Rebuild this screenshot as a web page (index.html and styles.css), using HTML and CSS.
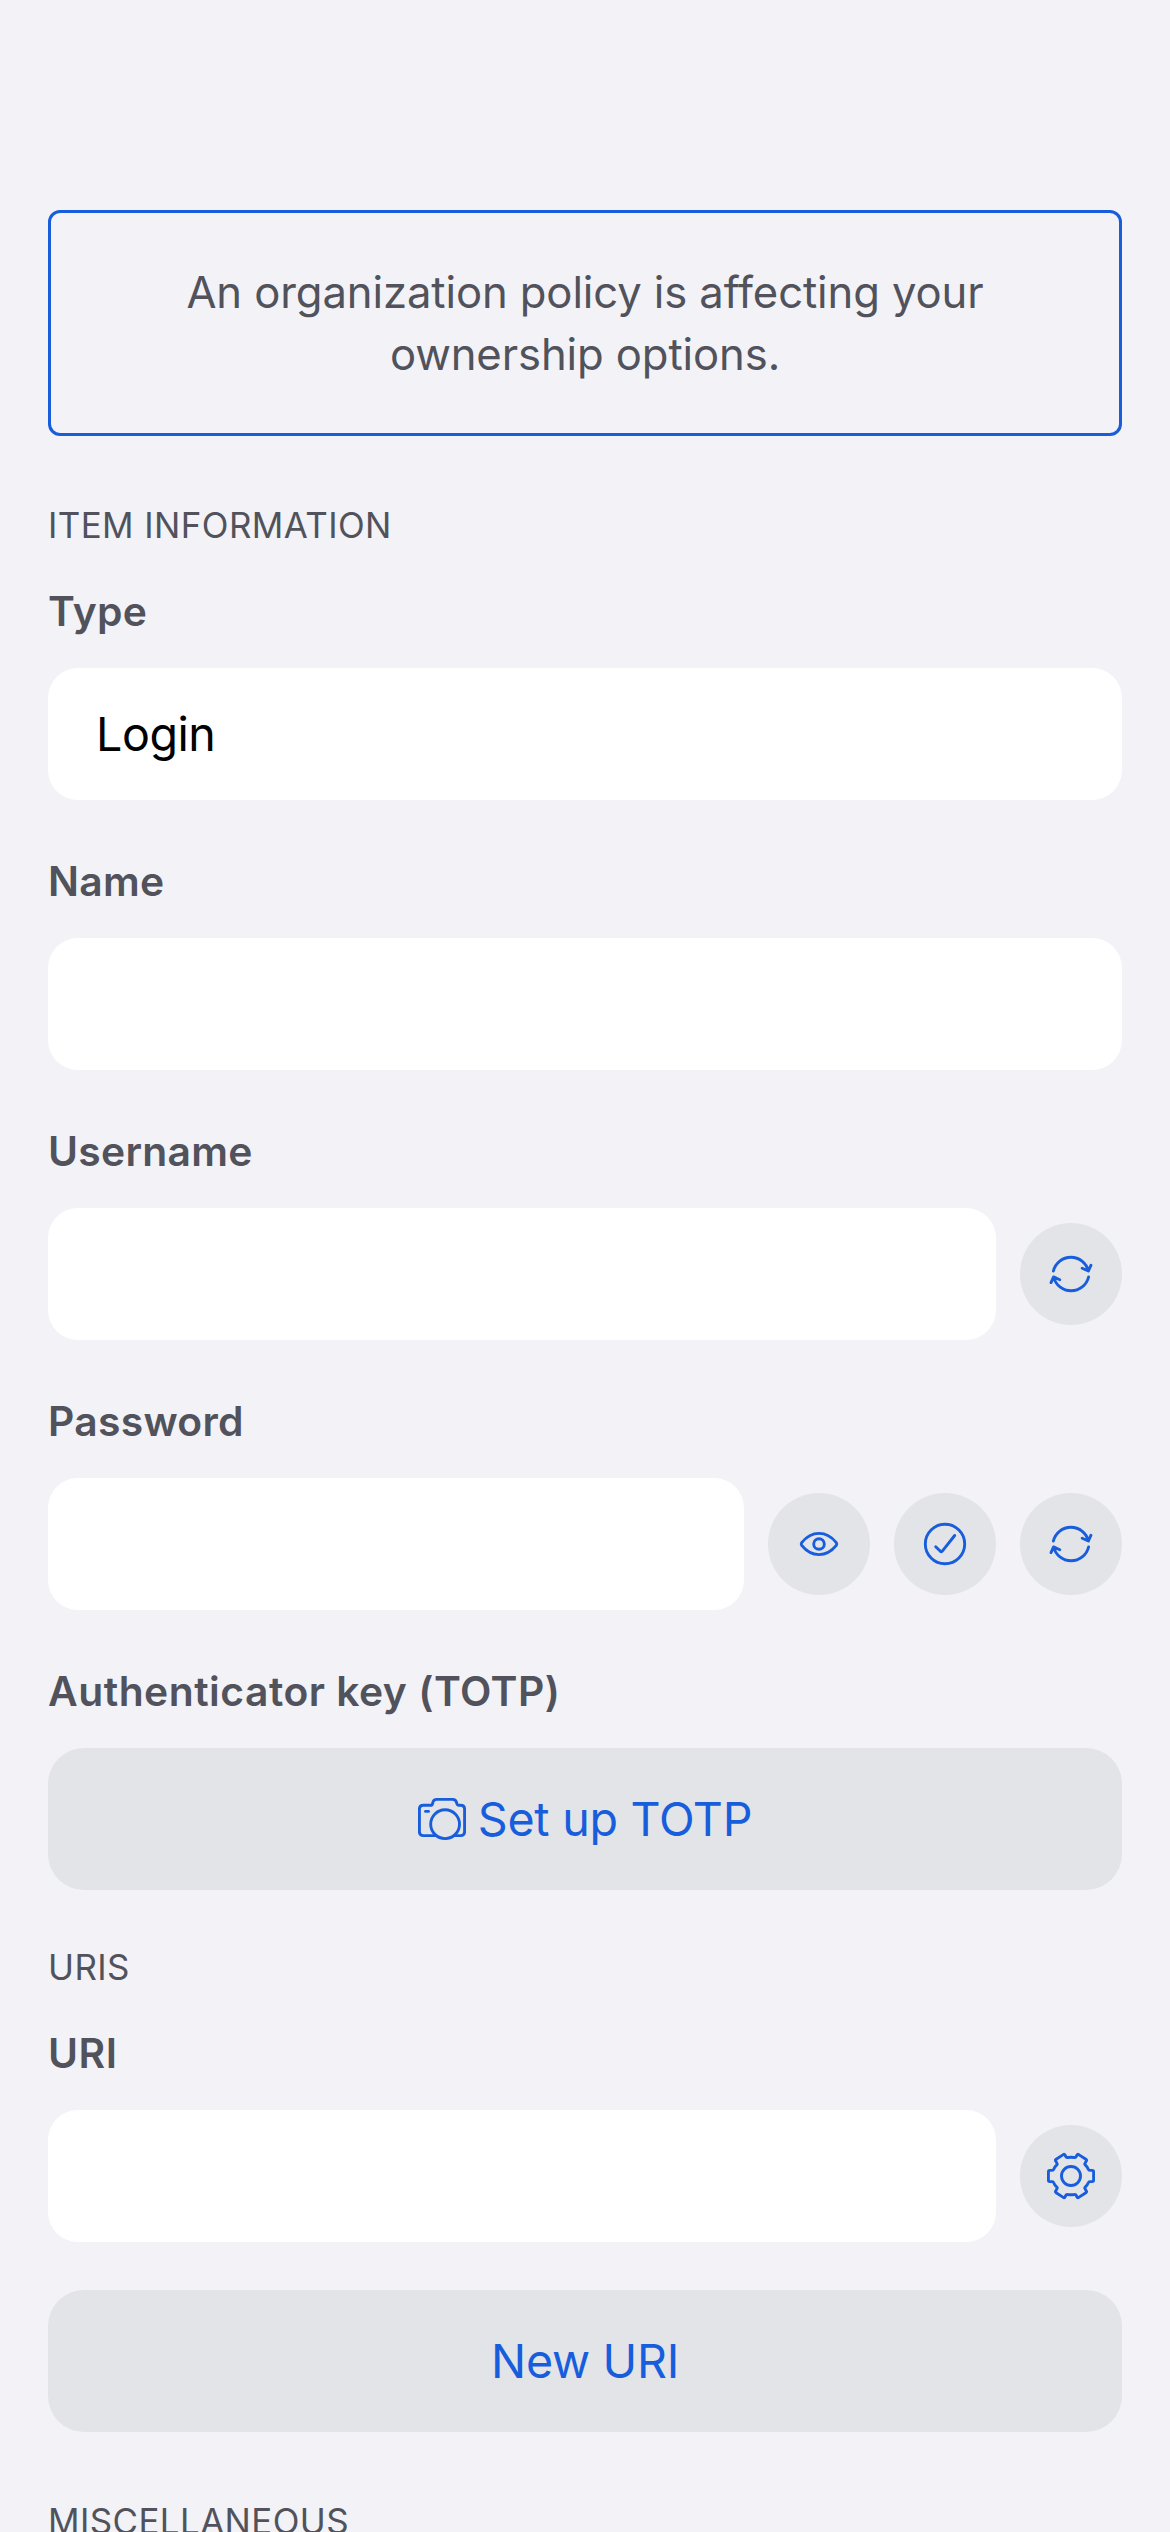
FILE: index.html
```
<!DOCTYPE html>
<html lang="en">
<head>
  <meta charset="utf-8">
  <title>Add item</title>
  <link rel="stylesheet" href="styles.css">
</head>
<body>
  <svg class="sprite" aria-hidden="true">
    <symbol id="icon-generate" viewBox="0 0 48 48">
      <path d="M6.4 21A18 18 0 0 1 41.4 21M35.2 18.2L41.4 21L44 15.2"/>
      <path d="M41.6 27A18 18 0 0 1 6.6 27M4 32.6L6.6 26.9L12.8 29.7"/>
    </symbol>
    <symbol id="icon-eye" viewBox="0 0 48 48">
      <path d="M6.7 22.6C10 18.5 16 13.4 24 13.4S38 18.5 41.3 22.6Q42.2 24 41.3 25.4C38 29.5 32 34.6 24 34.6S10 29.5 6.7 25.4Q5.8 24 6.7 22.6Z"/>
      <circle cx="24" cy="24" r="5.3"/>
    </symbol>
    <symbol id="icon-check" viewBox="0 0 48 48">
      <circle cx="24" cy="24" r="19.7"/>
      <path d="M14.7 26.7L19.4 31.3Q20.4 32.2 21.3 31.1L33.7 15.5"/>
    </symbol>
    <symbol id="icon-camera" viewBox="0 0 48 48">
      <path d="M18.2 40.6H5.4Q1.4 40.6 1.4 36.6V14.3Q1.4 10.3 5.4 10.3H12.6Q14.3 10.3 14.6 8.4Q15.2 4.4 18.8 4.4H34.6Q38.2 4.4 38.8 8.4Q39.1 10.3 40.8 10.3H42.6Q46.6 10.3 46.6 14.3V36.6Q46.6 40.6 42.6 40.6H36"/>
      <circle cx="27.1" cy="29.2" r="14.4"/>
      <path d="M7.5 16.4H10.5"/>
    </symbol>
    <symbol id="icon-gear" viewBox="0 0 48 48">
      <path d="M2.7 18.4H5.2Q6.3 18.4 6.7 17.3Q7.8 14.6 9.8 12.9Q10.5 12.2 10 11.4L8.6 8.8Q8.1 7.9 9.1 7.2L16.3 2.6Q17.5 1.9 18 2.9L18.8 4.6Q19.3 5.7 20.5 5.5Q24 5 27.5 5.5Q28.7 5.7 29.2 4.6L30 2.9Q30.5 1.9 31.7 2.6L38.9 7.2Q39.9 7.9 39.4 8.8L38 11.4Q37.5 12.2 38.2 12.9Q40.2 14.6 41.3 17.3Q41.7 18.4 42.8 18.4H45.3Q46.6 18.4 46.6 19.6V28.4Q46.6 29.6 45.3 29.6H42.8Q41.7 29.6 41.3 30.7Q40.2 33.4 38.2 35.1Q37.5 35.8 38 36.6L39.4 39.2Q39.9 40.1 38.9 40.8L31.7 45.4Q30.5 46.1 30 45.1L29.2 43.4Q28.7 42.3 27.5 42.5Q24 43 20.5 42.5Q19.3 42.3 18.8 43.4L18 45.1Q17.5 46.1 16.3 45.4L9.1 40.8Q8.1 40.1 8.6 39.2L10 36.6Q10.5 35.8 9.8 35.1Q7.8 33.4 6.7 30.7Q6.3 29.6 5.2 29.6H2.7Q1.4 29.6 1.4 28.4V19.6Q1.4 18.4 2.7 18.4Z"/>
      <circle cx="24" cy="24" r="9.5"/>
    </symbol>
  </svg>

  <main class="screen">
    <p class="notice">An organization policy is affecting your<br>ownership options.</p>

    <section class="section">
      <h2 class="section-title">ITEM INFORMATION</h2>
      <div class="fields">
        <div class="field">
          <span class="label">Type</span>
          <div class="row"><div class="input">Login</div></div>
        </div>
        <div class="field">
          <span class="label">Name</span>
          <div class="row"><div class="input"></div></div>
        </div>
        <div class="field">
          <span class="label">Username</span>
          <div class="row">
            <div class="input"></div>
            <button class="round" aria-label="Generate username"><svg class="icon"><use href="#icon-generate"/></svg></button>
          </div>
        </div>
        <div class="field">
          <span class="label">Password</span>
          <div class="row">
            <div class="input"></div>
            <button class="round" aria-label="Show password"><svg class="icon"><use href="#icon-eye"/></svg></button>
            <button class="round" aria-label="Check password"><svg class="icon"><use href="#icon-check"/></svg></button>
            <button class="round" aria-label="Generate password"><svg class="icon"><use href="#icon-generate"/></svg></button>
          </div>
        </div>
        <div class="field">
          <span class="label label-caps">Authenticator key (TOTP)</span>
          <button class="wide"><svg class="icon"><use href="#icon-camera"/></svg>Set up TOTP</button>
        </div>
      </div>
    </section>

    <section class="section section-uris">
      <h2 class="section-title">URIS</h2>
      <div class="field">
        <span class="label label-caps">URI</span>
        <div class="row">
          <div class="input"></div>
          <button class="round" aria-label="URI options"><svg class="icon"><use href="#icon-gear"/></svg></button>
        </div>
      </div>
      <button class="wide wide-spaced">New URI</button>
    </section>

    <section class="section">
      <h2 class="section-title">MISCELLANEOUS</h2>
    </section>
  </main>
</body>
</html>
```
FILE: styles.css
```
* {
  box-sizing: border-box;
}

body {
  margin: 0;
  background: #f2f2f7;
  color: #51525b;
  font-family: Inter, "Liberation Sans", sans-serif;
}

.sprite {
  display: none;
}

.screen {
  height: 2532px;
  padding: 210px 48px 0;
  overflow: hidden;
}

.notice {
  height: 226px;
  margin: 0;
  padding-top: 49px;
  border: 3px solid #175ddc;
  border-radius: 12px;
  font-size: 43.6px;
  line-height: 62px;
  letter-spacing: -0.1px;
  text-align: center;
}

.section {
  margin-top: 68px;
}

.section-uris {
  margin-top: 56px;
}

.section-title {
  margin: 0 0 39px;
  font-size: 34.9px;
  font-weight: 400;
  line-height: 43px;
  letter-spacing: 0.42px;
}

.fields {
  display: flex;
  flex-direction: column;
  gap: 56px;
}

.field {
  display: flex;
  flex-direction: column;
  gap: 32px;
}

.label {
  font-size: 40.8px;
  font-weight: 600;
  line-height: 50px;
  letter-spacing: 0.3px;
}

.label-caps {
  letter-spacing: 0.5px;
}

.row {
  display: flex;
  align-items: center;
  gap: 24px;
}

.input {
  flex: 1;
  height: 132px;
  padding: 0 48px;
  border-radius: 30px;
  background: #fff;
  color: #000;
  font-size: 46.6px;
  line-height: 132px;
  letter-spacing: -0.45px;
}

.round,
.wide {
  display: flex;
  align-items: center;
  justify-content: center;
  padding: 0;
  border: 0;
  background: #e2e4e8;
  color: #175ddc;
}

.round {
  width: 102px;
  height: 102px;
  border-radius: 50%;
}

.wide {
  gap: 12px;
  width: 100%;
  height: 142px;
  border-radius: 36px;
  font-family: inherit;
  font-size: 46.6px;
  letter-spacing: -0.28px;
}

.wide-spaced {
  margin-top: 48px;
}

.icon {
  width: 48px;
  height: 48px;
  fill: none;
  stroke: currentColor;
  stroke-width: 2.9;
  stroke-linecap: round;
  stroke-linejoin: round;
}
```
